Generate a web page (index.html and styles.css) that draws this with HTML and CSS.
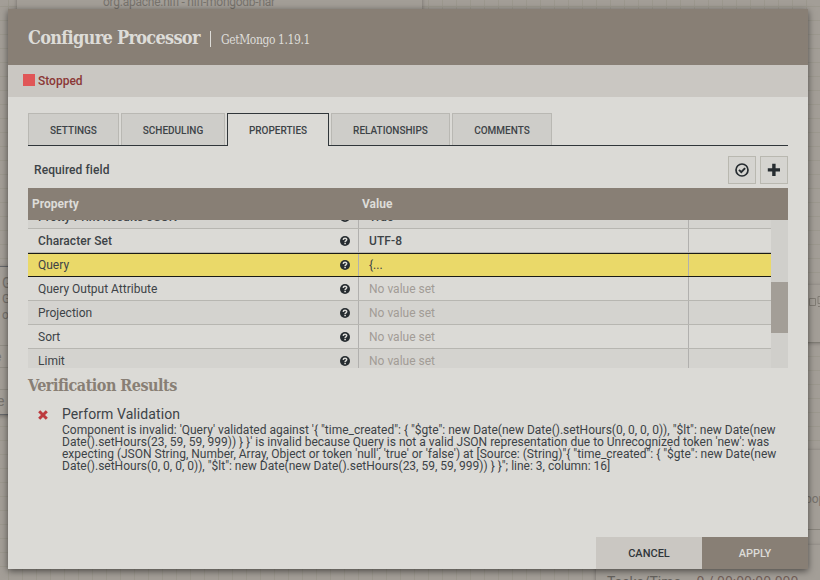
FILE: index.html
```html
<!DOCTYPE html>
<html lang="en">
<head>
    <meta charset="UTF-8">
    <meta name="viewport" content="width=device-width, initial-scale=1.0">
    <title>Configure Processor</title>
    <link rel="stylesheet" href="styles.css">
</head>
<body>
<svg class="defs" width="0" height="0">
  <symbol id="help" viewBox="0 0 10 10">
    <circle cx="5" cy="5" r="5" fill="#262c30"/>
    <path d="M3.2 3.9C3.3 1.7 6.8 1.8 6.7 3.8C6.6 4.8 5.1 4.8 5.1 6" fill="none" stroke="#dddcd8" stroke-width="1.5"/>
    <path d="M4.3 6.8h1.6v1.5H4.3z" fill="#dddcd8"/>
  </symbol>
</svg>

<!-- canvas behind the dialog -->
<div class="canvas">
  <div class="node node-top">org.apache.nifi - nifi-mongodb-nar</div>
  <div class="node node-left">
    <span class="node-name">Ge</span>
    <span class="node-type">Ge</span>
    <span class="node-bundle">or</span>
    <span class="node-stat first">e</span>
    <span class="node-stat"></span>
    <span class="node-stat last">e</span>
  </div>
  <div class="node node-right">
    <svg width="16" height="18" viewBox="0 0 16 18" fill="none" stroke="#817c74">
      <path d="M.5 4.5h6v7h-6zM9 2.5h6v7h-6zM9 12.5h6"/>
    </svg>
  </div>
  <div class="node node-prop">
    <div class="prop">bop</div>
    <div class="line"></div>
    <div class="line"></div>
    <div class="line"></div>
  </div>
  <div class="node node-bottom">
    <span class="tasks">Tasks/Time</span>
    <span class="time">0 / 00:00:00.000</span>
  </div>
</div>

<div class="dialog">
  <div class="dialog-header">
    <h1>Configure Processor</h1>
    <span class="subtitle">GetMongo 1.19.1</span>
  </div>
  <div class="status"><span class="stop-icon"></span>Stopped</div>

  <div class="content">
    <div class="tabs">
      <div class="tab settings">SETTINGS</div>
      <div class="tab scheduling">SCHEDULING</div>
      <div class="tab properties selected">PROPERTIES</div>
      <div class="tab relationships">RELATIONSHIPS</div>
      <div class="tab comments">COMMENTS</div>
    </div>

    <div class="toolbar">
      <span class="required">Required field</span>
      <button class="tool">
        <svg width="14" height="14" viewBox="0 0 14 14" fill="none" stroke="#262c30">
          <circle cx="7" cy="7" r="6" stroke-width="1.7"/>
          <path d="M4 6.9l2.3 2.2L10.1 5.1" stroke-width="2"/>
        </svg>
      </button>
      <button class="tool">
        <svg width="14" height="14" viewBox="0 0 14 14">
          <path d="M5.2 .7h3.4v4.5H13v3.3H8.6V13H5.2V8.5H.8V5.2h4.4z" fill="#262c30"/>
        </svg>
      </button>
    </div>

    <div class="table-header">
      <span class="col-name">Property</span>
      <span>Value</span>
    </div>
    <div class="table-body">
      <div class="rows">
        <div class="row odd bold clipped">
          <div class="name">Pretty Print Results JSON<svg class="help"><use href="#help"/></svg></div>
          <div class="value">True</div>
          <div class="actions"></div>
        </div>
        <div class="row bold">
          <div class="name">Character Set<svg class="help"><use href="#help"/></svg></div>
          <div class="value">UTF-8</div>
          <div class="actions"></div>
        </div>
        <div class="row active">
          <div class="name">Query<svg class="help"><use href="#help"/></svg></div>
          <div class="value">{...</div>
          <div class="actions"></div>
        </div>
        <div class="row">
          <div class="name">Query Output Attribute<svg class="help"><use href="#help"/></svg></div>
          <div class="value unset">No value set</div>
          <div class="actions"></div>
        </div>
        <div class="row odd">
          <div class="name">Projection<svg class="help"><use href="#help"/></svg></div>
          <div class="value unset">No value set</div>
          <div class="actions"></div>
        </div>
        <div class="row">
          <div class="name">Sort<svg class="help"><use href="#help"/></svg></div>
          <div class="value unset">No value set</div>
          <div class="actions"></div>
        </div>
        <div class="row odd">
          <div class="name">Limit<svg class="help"><use href="#help"/></svg></div>
          <div class="value unset">No value set</div>
          <div class="actions"></div>
        </div>
      </div>
      <div class="scrollbar"><div class="thumb"></div></div>
    </div>

    <h2>Verification Results</h2>
    <div class="result">
      <svg class="fail" width="10" height="10" viewBox="0 0 10 10">
        <path d="M1.2 1.2l7.6 7.6M8.8 1.2L1.2 8.8" stroke="#bd3a3e" stroke-width="3"/>
      </svg>
      <div>
        <div class="result-title">Perform Validation</div>
        <div class="result-text">Component is invalid: 'Query' validated against '{ "time_created": { "$gte": new Date(new Date().setHours(0, 0, 0, 0)), "$lt": new Date(new<br>Date().setHours(23, 59, 59, 999)) } }' is invalid because Query is not a valid JSON representation due to Unrecognized token 'new': was<br>expecting (JSON String, Number, Array, Object or token 'null', 'true' or 'false') at [Source: (String)"{ "time_created": { "$gte": new Date(new<br>Date().setHours(0, 0, 0, 0)), "$lt": new Date(new Date().setHours(23, 59, 59, 999)) } }"; line: 3, column: 16]</div>
      </div>
    </div>
  </div>

  <div class="buttons">
    <button class="btn cancel">CANCEL</button>
    <button class="btn apply">APPLY</button>
  </div>
</div>
</body>
</html>
```

FILE: styles.css
```css
* {
  box-sizing: border-box;
}

body {
  margin: 0;
  width: 820px;
  height: 580px;
  overflow: hidden;
  padding: 9px 12px 11px 8px;
  font-family: Roboto, sans-serif;
  font-size: 12px;
  color: #3d4347;
}

.defs {
  position: absolute;
}

/* canvas */
.canvas {
  position: absolute;
  top: 0;
  left: 0;
  width: 820px;
  height: 580px;
  overflow: hidden;
  background-color: #a39e97;
  background-image:
    linear-gradient(to right, #9c988e 1px, transparent 1px),
    linear-gradient(to bottom, #9c988e 1px, transparent 1px);
  background-size: 14px 14px;
  background-position: 8px 6px;
  color: #77736d;
}

.node {
  position: absolute;
  background: #a39e97;
  box-shadow: 0 1px 4px rgba(0, 0, 0, 0.3);
  white-space: nowrap;
}

.node-top {
  left: 17px;
  top: -20px;
  width: 405px;
  height: 60px;
  padding: 15px 0 0 86px;
  letter-spacing: -0.25px;
}

.node-left {
  left: -20px;
  top: 266px;
  width: 60px;
  height: 149px;
  border-top: 1px solid #65676a;
  border-bottom: 1px solid #65676a;
  padding-left: 22px;
}

.node-left span {
  display: block;
}

.node-name {
  font-size: 14px;
  line-height: 16px;
  padding-top: 8px;
}

.node-type {
  line-height: 16px;
}

.node-bundle {
  line-height: 16px;
  padding-bottom: 9px;
  height: 38px;
}

.node-stat {
  height: 22px;
  margin-left: -22px;
  padding-left: 15px;
  line-height: 22px;
  border-top: 1px solid #928e86;
}

.node-stat.last {
  font-size: 14px;
  padding-left: 17px;
}

.node-right {
  left: 790px;
  top: 285px;
  width: 60px;
  height: 57px;
  padding: 9px 0 0 19px;
}

.node-prop {
  left: 790px;
  top: 450px;
  width: 60px;
  height: 160px;
}

.prop {
  height: 79px;
  padding: 42px 0 0 15px;
}

.line {
  height: 22px;
  border-top: 1px solid #88847c;
}

.node-bottom {
  left: 596px;
  top: 545px;
  width: 240px;
  height: 60px;
  padding: 29px 0 0 11px;
  font-size: 14px;
  color: #66635e;
}

.node-bottom .time {
  margin-left: 12px;
  color: #735f59;
}

/* dialog */
.dialog {
  position: relative;
  display: flex;
  flex-direction: column;
  width: 800px;
  height: 560px;
  background: #dbdad6;
  box-shadow: 0 2px 7px rgba(0, 0, 0, 0.55);
}

.dialog-header {
  display: flex;
  height: 56px;
  padding-left: 20px;
  background: #887f75;
  color: #dddcd8;
  font-family: "Roboto Slab", "DejaVu Serif Condensed", "DejaVu Serif", serif;
}

h1 {
  width: 172px;
  margin: 0;
  font-size: 18px;
  line-height: 58px;
  letter-spacing: -0.72px;
  white-space: nowrap;
}

.subtitle {
  height: 16px;
  margin: 22px 0 0 10px;
  padding-left: 10px;
  border-left: 1px solid #dddcd8;
  font-size: 12px;
  line-height: 19px;
  letter-spacing: -0.4px;
}

.status {
  display: flex;
  align-items: center;
  height: 32px;
  padding-left: 15px;
  background: #cac7c2;
  color: #8a3836;
  font-weight: 500;
}

.stop-icon {
  width: 12px;
  height: 12px;
  margin: 0 3px 2px 0;
  background: #e05657;
}

.content {
  flex: 1;
  padding: 16px 20px 0;
}

.tabs {
  display: flex;
  height: 33px;
  border-bottom: 1px solid #30363a;
}

.tab {
  height: 32px;
  margin-right: 2px;
  border: 1px solid #b9b8b3;
  border-bottom: 0;
  background: #cecdc9;
  font-size: 10px;
  font-weight: 500;
  line-height: 34px;
  text-align: center;
}

.settings { width: 91px; }
.scheduling { width: 104px; }
.properties { width: 102px; }
.relationships { width: 119px; }
.comments { width: 100px; }

.tab.selected {
  height: 33px;
  border-color: #30363a;
  background: #dbdad6;
}

.toolbar {
  display: flex;
  align-items: center;
  gap: 4px;
  height: 42px;
  padding: 6px 0 0 6px;
}

.required {
  flex: 1;
  font-weight: 500;
  letter-spacing: 0.08px;
}

.tool {
  display: flex;
  align-items: center;
  justify-content: center;
  width: 28px;
  height: 28px;
  padding: 0;
  border: 1px solid #b9b8b0;
  background: #d5d4d0;
}

.table-header {
  display: flex;
  height: 32px;
  padding-left: 4px;
  background: #887f75;
  color: #dddcd8;
  font-weight: bold;
  line-height: 32px;
}

.col-name {
  width: 330px;
}

.table-body {
  display: flex;
  height: 148px;
  overflow: hidden;
}

.rows {
  width: 743px;
}

.row {
  display: flex;
  height: 24px;
  border-bottom: 1px solid #b7b6b1;
  line-height: 24px;
}

.row.clipped {
  margin-top: -15px;
}

.row.odd {
  background: #d4d3cf;
}

.row.bold {
  font-weight: 500;
  letter-spacing: 0.08px;
}

.row.active {
  border-top: 1px solid #191a17;
  border-bottom-color: #191a17;
  background: #ead969;
  line-height: 22px;
}

.name {
  display: flex;
  align-items: center;
  justify-content: space-between;
  width: 331px;
  padding: 0 8px 0 10px;
  border-right: 1px solid #b1b0ae;
}

.value {
  width: 330px;
  padding-left: 10px;
  border-right: 1px solid #b1b0ae;
}

.unset {
  color: #a29c96;
}

.help {
  width: 10px;
  height: 10px;
}

.scrollbar {
  width: 17px;
  padding-top: 62px;
  background: #d0cfcb;
}

.thumb {
  height: 51px;
  background: #a39e97;
}

h2 {
  margin: 8px 0 0;
  color: #887f75;
  font-family: "Roboto Slab", "DejaVu Serif Condensed", "DejaVu Serif", serif;
  font-size: 16px;
  line-height: 20px;
  letter-spacing: -0.5px;
  white-space: nowrap;
}

.result {
  display: flex;
  padding: 9px 0 0 10px;
}

.fail {
  margin: 5px 14px 0 0;
}

.result-title {
  font-size: 14px;
  line-height: 19px;
  letter-spacing: 0.08px;
}

.result-text {
  line-height: 12px;
  white-space: nowrap;
}

.buttons {
  display: flex;
  justify-content: flex-end;
  height: 32px;
}

.btn {
  width: 106px;
  padding: 0;
  border: 0;
  font-family: Roboto, sans-serif;
  font-size: 11px;
  font-weight: 500;
}

.cancel {
  background: #cac7c2;
  color: #30363a;
}

.apply {
  background: #887f75;
  color: #dddcd8;
}
```
